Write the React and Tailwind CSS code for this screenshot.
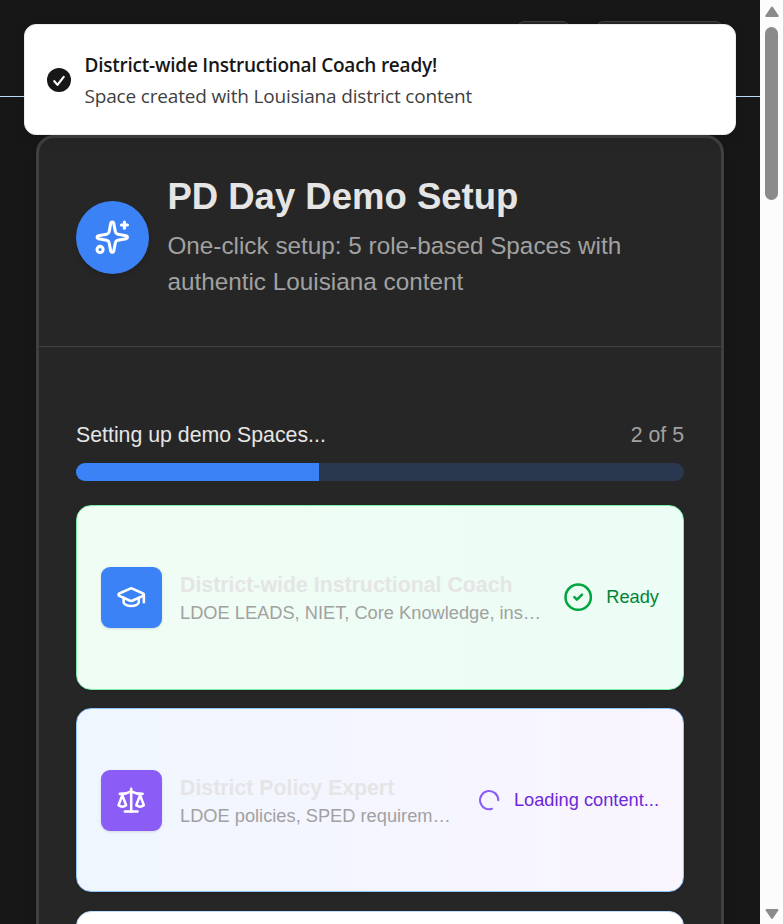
import React from "react";
import { Sparkles, GraduationCap, Scale, CircleCheck, LoaderCircle } from "lucide-react";

function Toast() {
  return (
    <div className="absolute left-6 top-6 flex h-[111px] w-[712px] items-center rounded-xl border border-[#ededed] bg-white pl-[22px] font-['Open_Sans','Noto_Sans',sans-serif] shadow-[0_4px_12px_rgba(0,0,0,0.1)]">
      <svg className="size-6 shrink-0" viewBox="0 0 24 24" fill="none">
        <circle cx="12" cy="12" r="12" fill="#171717" />
        <path d="m7.3 13.2 3.2 3.7 6.2-8" stroke="white" strokeWidth="2.2" strokeLinecap="round" strokeLinejoin="round" />
      </svg>
      <div className="ml-[13.5px] whitespace-nowrap pt-[2px]">
        <div className="text-[19px] font-semibold leading-[31px] tracking-[-0.23px] text-[#171717]">District-wide Instructional Coach ready!</div>
        <div className="text-[19px] leading-[31px] tracking-[-0.17px] text-[#3f3f3f]">Space created with Louisiana district content</div>
      </div>
    </div>
  );
}

function SpaceCard({ className, iconClass, icon, title, detail, textClass, children }) {
  return (
    <div className={`flex shrink-0 items-center rounded-[15px] border px-6 shadow-sm ${className}`}>
      <div className={`flex size-[61px] shrink-0 items-center justify-center rounded-[9px] text-white shadow-sm ${iconClass}`}>{icon}</div>
      <div className={`ml-[18px] min-w-0 flex-1 whitespace-nowrap ${textClass}`}>
        <div className="text-[21.3px] font-bold leading-[27px] text-[#e5e5e5]">{title}</div>
        <div className="text-[18.25px] leading-[27px] text-[#a1a1a1]">{detail}</div>
      </div>
      {children}
    </div>
  );
}

function Scrollbar() {
  return (
    <div className="flex h-full w-[23px] flex-col items-center bg-[#fcfcfc] pt-[6px] pb-[4px]">
      <svg className="h-3 w-4" viewBox="0 0 16 12">
        <path d="M8 1.5 13.8 10H2.2Z" fill="#8b8b8b" stroke="#8b8b8b" strokeWidth="2" strokeLinejoin="round" />
      </svg>
      <div className="mt-[9px] h-[173px] w-[13px] rounded-full bg-[#8b8b8b]" />
      <svg className="mt-auto h-3 w-4" viewBox="0 0 16 12">
        <path d="M8 10 13.5 2H2.5Z" fill="#8b8b8b" stroke="#8b8b8b" strokeWidth="2" strokeLinejoin="round" />
      </svg>
    </div>
  );
}

export default function App() {
  return (
    <div className="relative flex h-[924px] w-[783px] overflow-hidden bg-[#171717] font-['Liberation_Sans',Arial,sans-serif]">
      <div className="flex h-full w-[760px] flex-col">
        <header className="flex h-[97px] shrink-0 items-start justify-end gap-[24px] border-b border-[#bedbff] pr-[36px] pt-[21px]">
          <div className="h-[55px] w-[55px] rounded-[9px] border border-[#404040] bg-[#262626]" />
          <div className="h-[55px] w-[129px] rounded-[9px] border border-[#404040] bg-[#262626]" />
        </header>
        <main className="mx-9 mt-[38px] h-[1200px] shrink-0 rounded-[18px] border-[3px] border-[#404040] bg-[#262626] shadow-lg">
          <div className="flex h-[209px] items-start border-b border-[#404040] px-[37px]">
            <div className="mt-[63px] flex size-[73px] shrink-0 items-center justify-center rounded-full bg-[#3b82f6] text-white shadow-md">
              <Sparkles size={36.5} />
            </div>
            <div className="ml-[18.4px] mt-[36px]">
              <h1 className="text-[36.5px] font-bold leading-[46px] text-[#e5e5e5]">PD Day Demo Setup</h1>
              <p className="mt-[8px] text-[24.3px] leading-[36px] text-[#a1a1a1]">
                One-click setup: 5 role-based Spaces with authentic Louisiana content
              </p>
            </div>
          </div>
          <div className="flex flex-col px-[37px] pt-[73px]">
            <div className="flex justify-between text-[21.3px] leading-[30px]">
              <span className="text-[#e5e5e5]">Setting up demo Spaces...</span>
              <span className="text-[#a1a1a1]">2 of 5</span>
            </div>
            <div className="mt-[13px] h-[18px] overflow-hidden rounded-full bg-[#2a384f]">
              <div className="h-full w-2/5 bg-[#3b82f6]" />
            </div>
            <div className="mt-6 flex flex-col">
              <SpaceCard
                className="h-[185px] border-green-300 bg-linear-to-r from-green-50 to-emerald-50"
                iconClass="bg-[#3b82f6]"
                icon={<GraduationCap size={30.4} />}
                title="District-wide Instructional Coach"
                detail="LDOE LEADS, NIET, Core Knowledge, ins…"
                textClass="pt-[2px]"
              >
                <div className="flex shrink-0 items-center gap-[13px]">
                  <CircleCheck size={30.4} className="text-green-600" />
                  <span className="pb-[2px] text-[18.25px] text-green-700">Ready</span>
                </div>
              </SpaceCard>
              <SpaceCard
                className="mt-[18px] h-[184px] border-blue-300 bg-linear-to-r from-blue-50 to-purple-50"
                iconClass="bg-[#8b5cf6]"
                icon={<Scale size={30.4} />}
                title="District Policy Expert"
                detail="LDOE policies, SPED requirem…"
                textClass="pt-[3px]"
              >
                <div className="flex shrink-0 items-center gap-[13px]">
                  <LoaderCircle size={24.3} className="rotate-72 text-[#8b5cf6]" />
                  <span className="text-[18.25px] text-[#6d28d9]">Loading content...</span>
                </div>
              </SpaceCard>
              <div className="mt-[19px] h-[184px] rounded-[15px] border border-blue-200 bg-white" />
            </div>
          </div>
        </main>
      </div>
      <Scrollbar />
      <Toast />
    </div>
  );
}
